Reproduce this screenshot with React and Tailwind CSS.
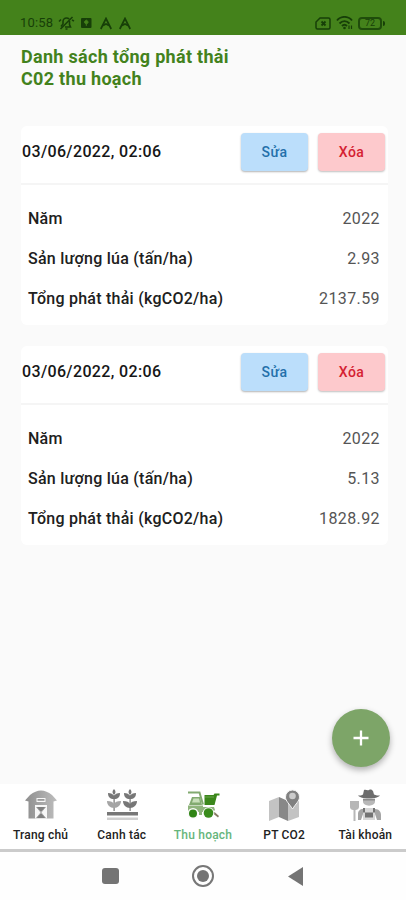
import React from 'react';

const records = [
  { id: 1, date: '03/06/2022, 02:06', year: '2022', yield: '2.93', emission: '2137.59' },
  { id: 2, date: '03/06/2022, 02:06', year: '2022', yield: '5.13', emission: '1828.92' },
];

const StatusBar = () => (
  <div className="flex h-[35px] shrink-0 items-end justify-between bg-[#44821b] pr-[21px] pb-[4px] pl-[20px] text-[#173f08]">
    <div className="flex items-center">
      <span className="w-[35px] text-[13px] leading-4 tracking-[0.2px]">10:58</span>
      <svg className="ml-[3px]" width="17" height="16" viewBox="0 0 17 16" fill="none" stroke="currentColor" strokeWidth="1.6">
        <path d="M3 11.5 5 9V6.5C5 4.5 6.5 3 8.5 3c1.2 0 2 .4 2.7 1M7 12h5.5L11.5 9.5V6M1 6.5l2-2M14 5l2 1M7.5 14h2" />
        <path d="M14.5 2 2.5 14" />
      </svg>
      <svg className="ml-[6px]" width="11" height="12" viewBox="0 0 11 12">
        <rect x="0" y="1" width="10.5" height="10" rx="1" fill="currentColor" />
        <path d="M3.5 4.5 5.3 3l1.8 1.5v1.3L5.3 7.3 3.5 5.8zM5.3 7v2" fill="#44821b" stroke="#44821b" strokeWidth="0.8" />
      </svg>
      <svg className="ml-[8px]" width="12" height="13" viewBox="0 0 12 13" fill="none" stroke="currentColor" strokeWidth="1.7">
        <path d="M.8 12 6 1.5 11.2 12M3 8.5 6 7l3 1.5" />
      </svg>
      <svg className="ml-[7px]" width="12" height="13" viewBox="0 0 12 13" fill="none" stroke="currentColor" strokeWidth="1.7">
        <path d="M.8 12 6 1.5 11.2 12M3 8.5 6 7l3 1.5" />
      </svg>
    </div>
    <div className="flex items-center pb-px">
      <svg width="16" height="13" viewBox="0 0 16 13" fill="none" stroke="currentColor" strokeWidth="1.5">
        <path d="M5 1h8.5C14.5 1 15 1.5 15 2.5v8c0 1-.5 1.5-1.5 1.5h-11C1.5 12 1 11.5 1 10.5V5z" />
        <path d="m6.5 4.5 4 4m0-4-4 4" strokeWidth="1.8" />
      </svg>
      <svg className="ml-[5px]" width="17" height="14" viewBox="0 0 17 14" fill="none" stroke="currentColor" strokeWidth="1.9">
        <path d="M1 4.5C5-.3 12-.3 16 4.5M3.5 7.5c3-3.2 7-3.2 10 0M6 10c1.5-1.6 3.5-1.6 5 0" />
        <circle cx="8.5" cy="12" r="1.3" fill="currentColor" stroke="none" />
        <path d="M13 9.5v3.5M15.5 9.5v3.5" strokeWidth="1.2" />
      </svg>
      <div className="ml-[5px] flex h-[13px] w-[24px] items-center justify-center rounded-[4px] border-2 border-[#173f08]/80 text-[9px] leading-none">
        72
      </div>
      <div className="ml-px h-[5px] w-[2px] rounded-r bg-[#173f08]" />
    </div>
  </div>
);

const DataRow = ({ label, value }) => (
  <div className="flex h-10 items-center justify-between">
    <span className="text-[16px] font-medium tracking-[0.25px] text-[#202020]">{label}</span>
    <span className="text-[16px] tracking-[0.4px] text-[#555]">{value}</span>
  </div>
);

const RecordCard = ({ record }) => (
  <div className="h-[199px] rounded-md bg-white">
    <div className="flex h-[59px] items-center border-b-2 border-[#f5f5f5] pr-[3px] pb-[5px] pl-[1px]">
      <span className="flex-1 text-[16px] font-medium tracking-[0.35px] text-[#161616]">{record.date}</span>
      <button className="mr-[10px] h-[38px] w-[67px] rounded bg-[#bbdefb] text-[14px] font-medium tracking-[0.4px] text-[#2470aa] shadow-[0_1px_2px_rgba(0,0,0,0.3)]">
        Sửa
      </button>
      <button className="h-[38px] w-[67px] rounded bg-[#fdc9cc] text-[14px] font-medium tracking-[0.4px] text-[#d51f33] shadow-[0_1px_2px_rgba(0,0,0,0.25)]">
        Xóa
      </button>
    </div>
    <div className="pt-[14px] pr-[8px] pl-[7px]">
      <DataRow label="Năm" value={record.year} />
      <DataRow label="Sản lượng lúa (tấn/ha)" value={record.yield} />
      <DataRow label="Tổng phát thải (kgCO2/ha)" value={record.emission} />
    </div>
  </div>
);

const BarnIcon = () => (
  <svg width="34" height="32" viewBox="0 0 34 32">
    <defs>
      <linearGradient id="barn" x1="0" x2="1">
        <stop offset="0" stopColor="#8e8e8e" />
        <stop offset="1" stopColor="#bdbdbd" />
      </linearGradient>
    </defs>
    <path d="M1 11.5 6 6Q17 -3 28 6L33 11.5 29.5 12.5V29.5H4.5V12.5z" fill="url(#barn)" />
    <path d="M11 29.5V16h12v13.5zM12.5 9h9v4h-9z" fill="#f7f7f7" />
    <path d="M13.5 10h7v1.8h-7z" fill="#999" />
    <path d="M12.5 18h9L17 23zM12.5 29h9L17 24z" fill="#808080" />
    <path d="m12.5 18 9 11m0-11-9 11" stroke="#999" strokeWidth="0.8" />
  </svg>
);

const CropIcon = () => (
  <svg width="32" height="32" viewBox="0 0 32 32">
    <g fill="#777">
      <path d="M8 0c2 2 2 4 0 6C6 4 6 2 8 0zM24 0c2 2 2 4 0 6-2-2-2-4 0-6zM2 4c3 0 5 1 6 3 1-2 3-3 6-3 0 4-2 6-6 6S2 8 2 4zM18 4c3 0 5 1 6 3 1-2 3-3 6-3 0 4-2 6-6 6s-6-2-6-6z" />
      <path d="M17 12c4 0 6 1 7 3 1-2 3-3 7-3 0 4-3 7-7 7s-7-3-7-7z" />
      <path d="M7.5 6h1.200v16H7.5zM23.5 6h1.200v16h-1.200zM1 23h31v3.500H1z" />
    </g>
    <path d="M1 12c4 0 6 1 7 3 1-2 3-3 7-3 0 4-3 7-7 7s-7-3-7-7z" fill="#a5a5a5" />
    <path d="M1 28.5h31V31H1z" fill="#d0d0d0" />
  </svg>
);

const HarvesterIcon = () => (
  <svg width="34" height="30" viewBox="0 0 34 30">
    <path d="M2 2.5h11.5l3.5 12" fill="none" stroke="#82aa70" strokeWidth="2" />
    <path d="M6 7h8l2 8H3z" fill="#82aa70" />
    <path d="M7.5 8.5H13l1 4H6z" fill="#c8dfba" />
    <path d="M18.5 5h9l1-1.500h5v2h-2.500l-2.500 9.500H18.5z" fill="#3b871b" />
    <path d="M19 7h9" stroke="#6ca44f" strokeWidth="1" />
    <path d="M2 15.5h15V17h11l1 3-2 2H2z" fill="#8fb47c" />
    <path d="m28.500 22 4.500 4-1 1.500-5-4z" fill="#867b65" />
    <circle cx="7" cy="23.5" r="5.5" fill="#fafafa" />
    <circle cx="7" cy="23.5" r="4" fill="#2f8414" />
    <circle cx="22.500" cy="23" r="5.8" fill="#fafafa" />
    <circle cx="22.500" cy="23" r="4.8" fill="#398c1c" />
    <path d="M13 20h3v5h-3z" fill="#8fb47c" />
  </svg>
);

const MapIcon = () => (
  <svg width="34" height="32" viewBox="0 0 34 32">
    <path d="m2 12 10-4v20L2 32z" fill="#c3c3c3" />
    <path d="m12 8 9 4v20l-9-4z" fill="#888" />
    <path d="m21 12 11-4v20l-11 4z" fill="#c3c3c3" />
    <path d="M25.500 20c-3-5-7-8-7-12a7 7 0 0 1 14 0c0 4-4 7-7 12z" fill="#818181" stroke="#f5f5f5" strokeWidth="1" />
    <circle cx="25.500" cy="7" r="3.3" fill="#ccc" />
  </svg>
);

const FarmerIcon = () => (
  <svg width="32" height="32" viewBox="0 0 32 32">
    <path d="M9 6.500c2 0 4 0 5-1l1-4.500c2-1 3 1 5 0s3 0 4 1l1 3.500c2 1 4 1 6 1-2 2-5 3-11 3S11 8.500 9 6.500z" fill="#6c6c6c" />
    <path d="M14 9.500h12v3c0 5.500-12 5.500-12 0z" fill="#b8b8b8" />
    <path d="M14 10h12v1.500H14z" fill="#8b8b8b" />
    <path d="M1 12h9v6c0 2-2 3-3.500 3v11h-2V21C2 21 1 19 1 18z" fill="#b7b7b7" />
    <path d="M9 31v-6c0-3 2-5 5-5v5l-2 6zM26 20c4 0 6 3 6 6v5h-4l-2-6z" fill="#a5a5a5" />
    <path d="M14 19h12v12H14z" fill="#d8d8d8" />
    <path d="M16 23.500h8v5h-8zM14 19h2v4.500h-2zM24 19h2v4.500h-2z" fill="#737373" />
  </svg>
);

const tabs = [
  { label: 'Trang chủ', Icon: BarnIcon },
  { label: 'Canh tác', Icon: CropIcon },
  { label: 'Thu hoạch', Icon: HarvesterIcon, active: true },
  { label: 'PT CO2', Icon: MapIcon },
  { label: 'Tài khoản', Icon: FarmerIcon },
];

const BottomTabs = () => (
  <nav className="grid h-[68px] shrink-0 grid-cols-5 border-b-[3px] border-[#cbcbcb] bg-white">
    {tabs.map(({ label, Icon, active }) => (
      <div key={label} className="flex flex-col items-center pt-[5px]">
        <div className="flex h-[32px] items-center">
          <Icon />
        </div>
        <span
          className={`mt-[6px] text-[12px] leading-4 font-medium tracking-[0.2px] whitespace-nowrap ${
            active ? 'text-[#66b57b]' : 'text-[#222]'
          }`}
        >
          {label}
        </span>
      </div>
    ))}
  </nav>
);

const SystemNav = () => (
  <div className="flex h-[48px] shrink-0 items-center bg-[#fefefe] pl-[102px]">
    <div className="h-[16px] w-[17px] rounded-[3px] bg-[#747474]" />
    <div className="ml-[73px] flex h-[22px] w-[22px] items-center justify-center rounded-full border-2 border-[#777]">
      <div className="h-[12px] w-[12px] rounded-full bg-[#747474]" />
    </div>
    <svg className="ml-[74px]" width="15" height="19" viewBox="0 0 15 19">
      <path d="M0 9.5 15 0v19z" fill="#747474" />
    </svg>
  </div>
);

const App = () => {
  return (
    <div className="flex h-[900px] w-[406px] flex-col overflow-hidden bg-[#fafafa] font-['Roboto',sans-serif]">
      <StatusBar />
      <main className="relative flex-1 px-[21px] pt-[11px]">
        <h1 className="text-[18px] leading-[22px] font-bold tracking-[0.3px] text-[#43821d]">
          Danh sách tổng phát thải
          <br />
          C02 thu hoạch
        </h1>
        <div className="mt-[36px] mr-[-3px] flex flex-col gap-[21px]">
          {records.map((record) => (
            <RecordCard key={record.id} record={record} />
          ))}
        </div>
        <button className="absolute right-[16px] bottom-[17px] flex h-[58px] w-[58px] items-center justify-center rounded-full bg-[#7da568] shadow-[0_3px_6px_rgba(0,0,0,0.3)]">
          <svg width="16" height="16" viewBox="0 0 16 16" stroke="#fff" strokeWidth="2.3">
            <path d="M8 .5v15M.5 8h15" />
          </svg>
        </button>
      </main>
      <BottomTabs />
      <SystemNav />
    </div>
  );
};

export default App;
